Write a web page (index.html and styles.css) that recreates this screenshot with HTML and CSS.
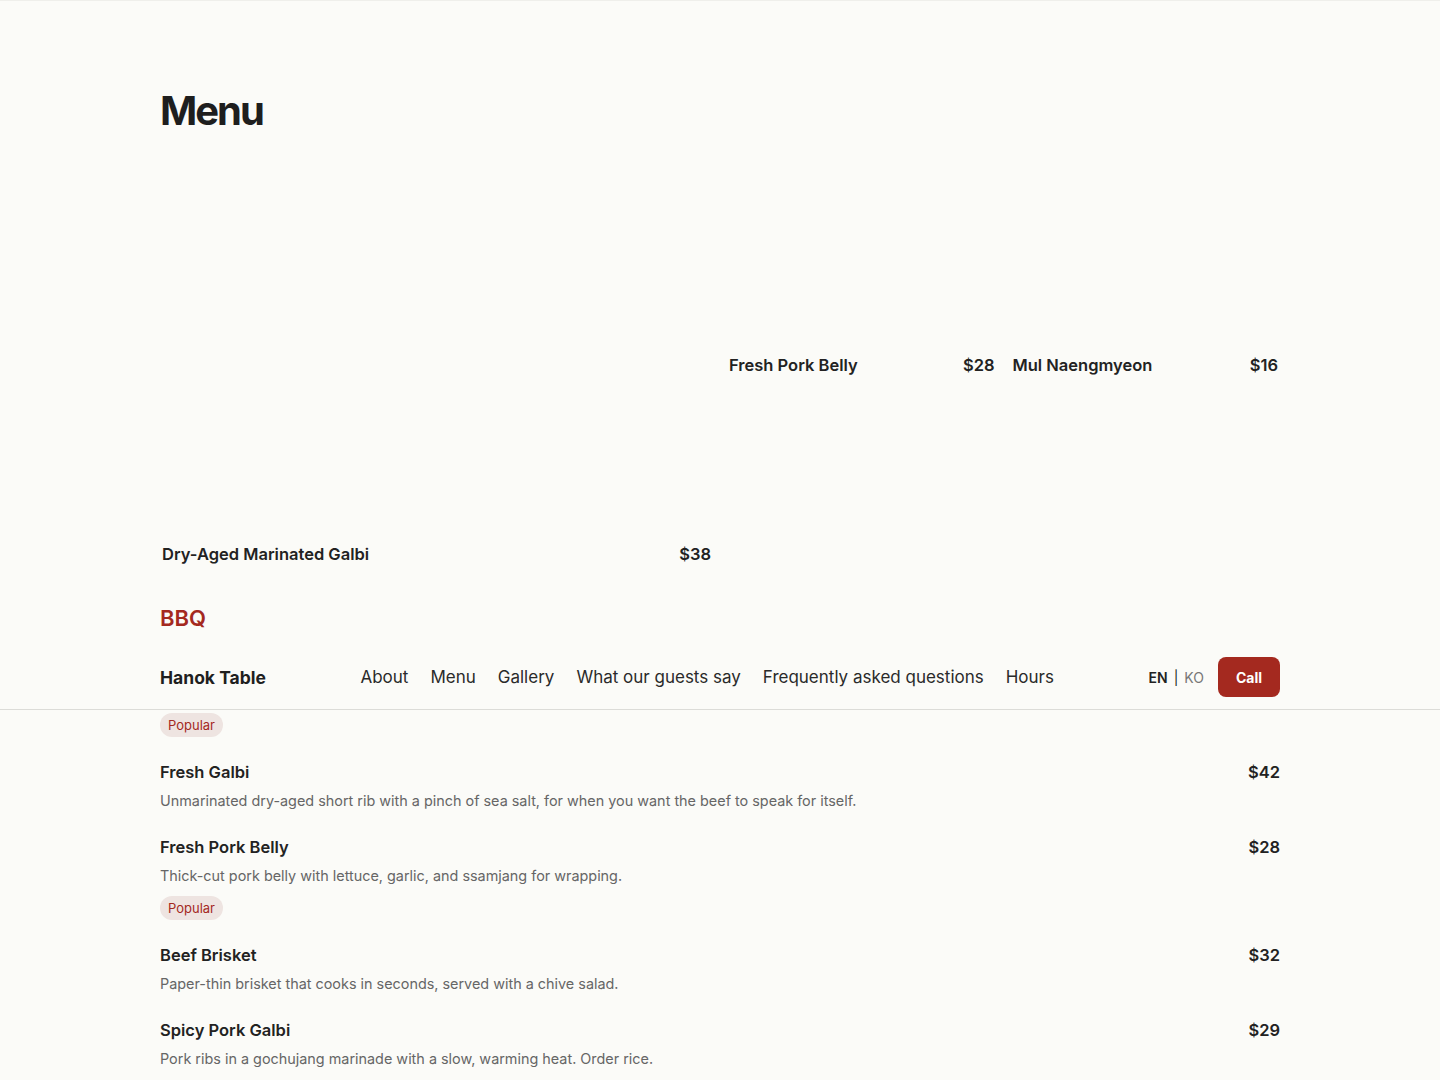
FILE: index.html
```html
<!DOCTYPE html>
<html lang="en">
<head>
  <meta charset="UTF-8" />
  <meta name="viewport" content="width=device-width, initial-scale=1.0"/>
  <title>Hanok Table – Menu</title>
  <link rel="stylesheet" href="styles.css">
</head>
<body>
  <!-- header sits over the list, like on the live page -->
  <header class="site-header">
    <div class="header-inner">
      <a class="brand" href="#">Hanok Table</a>
      <nav class="nav-links">
        <a href="#about">About</a>
        <a href="#menu">Menu</a>
        <a href="#gallery">Gallery</a>
        <a href="#reviews">What our guests say</a>
        <a href="#faq">Frequently asked questions</a>
        <a href="#hours">Hours</a>
      </nav>
      <div class="header-right">
        <div class="lang">
          <span class="lang-on">EN</span>
          <span class="lang-sep">|</span>
          <span class="lang-off">KO</span>
        </div>
        <a class="call-btn" href="#">Call</a>
      </div>
    </div>
  </header>

  <main class="page">
    <section class="menu-section" id="menu">
      <h2 class="section-title">Menu</h2>

      <div class="photo-grid">
        <figure class="photo photo-big">
          <figcaption><span>Dry-Aged Marinated Galbi</span><span>$38</span></figcaption>
        </figure>
        <figure class="photo">
          <figcaption><span>Fresh Pork Belly</span><span>$28</span></figcaption>
        </figure>
        <figure class="photo">
          <figcaption><span>Mul Naengmyeon</span><span>$16</span></figcaption>
        </figure>
      </div>

      <h3 class="category">BBQ</h3>

      <ul class="menu-list">
        <li class="menu-item">
          <div class="item-top">
            <span class="item-name">Dry-Aged Marinated Galbi</span>
            <span class="item-price">$38</span>
          </div>
          <p class="item-desc">Short rib aged in-house, then marinated in pear, soy and garlic.</p>
          <span class="badge">Popular</span>
        </li>
        <li class="menu-item">
          <div class="item-top">
            <span class="item-name">Fresh Galbi</span>
            <span class="item-price">$42</span>
          </div>
          <p class="item-desc">Unmarinated dry-aged short rib with a pinch of sea salt, for when you want the beef to speak for itself.</p>
        </li>
        <li class="menu-item">
          <div class="item-top">
            <span class="item-name">Fresh Pork Belly</span>
            <span class="item-price">$28</span>
          </div>
          <p class="item-desc">Thick-cut pork belly with lettuce, garlic, and ssamjang for wrapping.</p>
          <span class="badge">Popular</span>
        </li>
        <li class="menu-item">
          <div class="item-top">
            <span class="item-name">Beef Brisket</span>
            <span class="item-price">$32</span>
          </div>
          <p class="item-desc">Paper-thin brisket that cooks in seconds, served with a chive salad.</p>
        </li>
        <li class="menu-item">
          <div class="item-top">
            <span class="item-name">Spicy Pork Galbi</span>
            <span class="item-price">$29</span>
          </div>
          <p class="item-desc">Pork ribs in a gochujang marinade with a slow, warming heat. Order rice.</p>
        </li>
      </ul>
    </section>
  </main>
</body>
</html>
```

FILE: styles.css
```css
body {
  margin: 0;
  font-family: Inter, "Noto Sans", Arial, sans-serif;
  background-color: #fbfbf8;
  color: #222;
  border-top: 1px solid #efefeb;
  position: relative;
}
a {
  color: inherit;
  text-decoration: none;
}

/* header */
.site-header {
  position: absolute;
  top: 644px;
  left: 0;
  right: 0;
  z-index: 5;
  background-color: #fbfbf8;
  border-bottom: 1px solid #dcdcd8;
}
.header-inner {
  max-width: 1120px;
  height: 64px;
  margin: 0 auto;
  display: flex;
  align-items: center;
  justify-content: space-between;
}
.brand {
  font-size: 17.5px;
  font-weight: 700;
  color: #1f1f1f;
}
.nav-links {
  display: flex;
  gap: 22px;
  font-size: 17px;
  color: #2a2a2a;
}
.header-right {
  display: flex;
  align-items: center;
  gap: 14px;
}
.lang {
  display: flex;
  gap: 6px;
  font-size: 14px;
}
.lang-on {
  font-weight: 600;
  color: #222;
}
.lang-off {
  color: #777;
}
.call-btn {
  background-color: #a4291f;
  color: white;
  font-size: 14px;
  font-weight: 700;
  height: 40px;
  padding: 0 18px;
  border-radius: 8px;
  display: flex;
  align-items: center;
}

/* menu */
.page {
  max-width: 1120px;
  margin: 0 auto;
}
.menu-section {
  padding-top: 86px;
}
.section-title {
  font-size: 40px;
  font-weight: 700;
  letter-spacing: -0.05em;
  line-height: 48px;
  margin: 0 0 67px;
  color: #1e1e1e;
}
.photo-grid {
  display: grid;
  grid-template-columns: repeat(4, 1fr);
  grid-auto-rows: 175px;
  gap: 14px;
}
.photo {
  margin: 0;
  display: flex;
  flex-direction: column;
  justify-content: flex-end;
}
.photo-big {
  grid-column: span 2;
  grid-row: span 2;
}
.photo figcaption {
  display: flex;
  justify-content: space-between;
  padding: 0 2px;
  font-size: 16.5px;
  font-weight: 600;
  line-height: 24px;
  color: #222;
}
.category {
  font-size: 22px;
  font-weight: 600;
  color: #a4291f;
  line-height: 28px;
  margin: 38px 0 20px;
}
.menu-list {
  list-style: none;
  margin: 0;
  padding: 0;
  display: flex;
  flex-direction: column;
  gap: 23px;
}
.menu-item {
  display: flex;
  flex-direction: column;
  align-items: flex-start;
}
.item-top {
  align-self: stretch;
  display: flex;
  justify-content: space-between;
  font-size: 16.5px;
  font-weight: 600;
  line-height: 24px;
}
.item-desc {
  margin: 6px 0 0;
  font-size: 14.4px;
  line-height: 22px;
  color: #666;
}
.badge {
  margin-top: 9px;
  background-color: #eee4e1;
  color: #a4291f;
  font-size: 13px;
  line-height: 24px;
  padding: 0 8px;
  border-radius: 12px;
}
```
